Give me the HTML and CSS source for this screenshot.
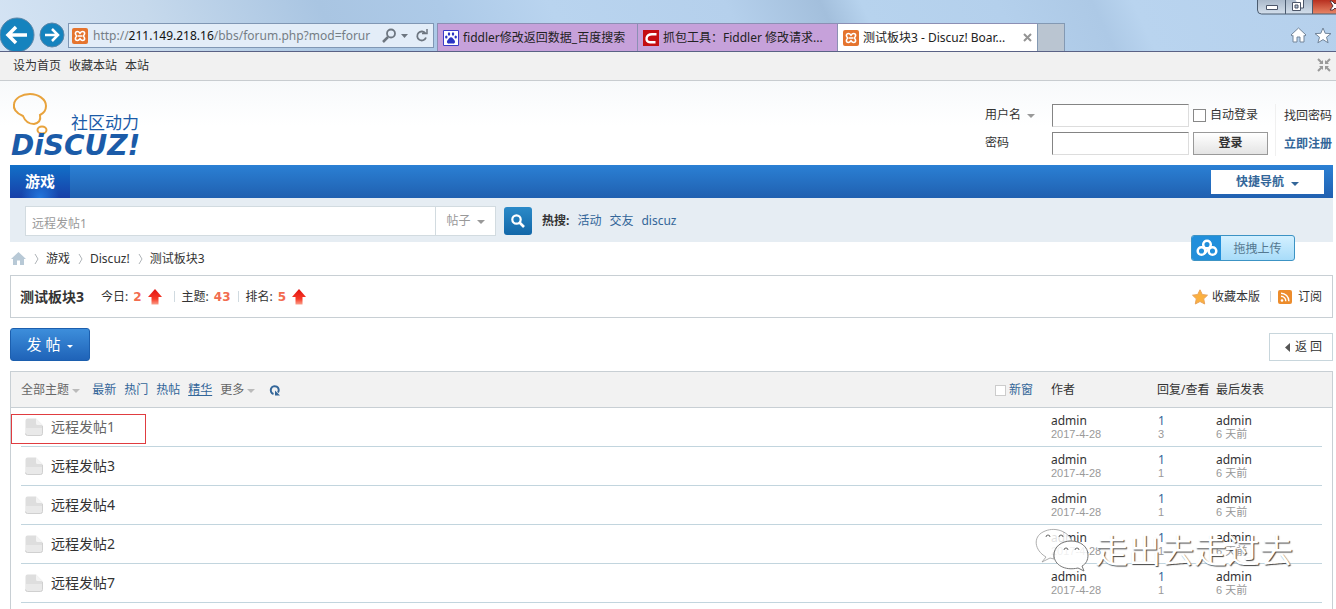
FILE: index.html
```html
<!DOCTYPE html>
<html lang="zh-CN">
<head>
<meta charset="utf-8">
<title>测试板块3 - Discuz! Board</title>
<link rel="stylesheet" href="styles.css">
</head>
<body>
<svg class="defs" width="0" height="0" aria-hidden="true">
  <symbol id="xampp" viewBox="0 0 16 16">
    <rect width="16" height="16" rx="2" fill="#e5742e"/>
    <path d="M8 5.200C7 3.800 6.300 3.500 5.400 3.500a2 2 0 0 0-2 2c0 1 .5 1.700 1.400 2.500-.9.800-1.400 1.500-1.400 2.500a2 2 0 0 0 2 2c.9 0 1.600-.3 2.600-1.700 1 1.400 1.700 1.700 2.600 1.700a2 2 0 0 0 2-2c0-1-.5-1.700-1.400-2.500.9-.8 1.400-1.500 1.400-2.500a2 2 0 0 0-2-2c-.9 0-1.600.3-2.600 1.700zM6 8h4" fill="none" stroke="#fff" stroke-width="1.600"/>
  </symbol>
  <symbol id="doc" viewBox="0 0 18 18">
    <path d="M2.500.5H11l6.500 6.500v8.500a2 2 0 0 1-2 2h-13a2 2 0 0 1-2-2v-13a2 2 0 0 1 2-2z" fill="#dedede"/>
    <path d="M1 10h16v5.500a1.500 1.500 0 0 1-1.500 1.500h-13A1.500 1.500 0 0 1 1 15.500z" fill="#e9e9e9"/>
    <path d="M.5 15.500a2 2 0 0 0 2 2h13a2 2 0 0 0 2-2V8" fill="none" stroke="#d0d0d0"/>
    <path d="M11 .5V5.500a1.500 1.500 0 0 0 1.500 1.500h5z" fill="#f4f4f4"/>
  </symbol>
  <symbol id="up" viewBox="0 0 14 16">
    <path d="M7 0l7 8h-3.500v7.500h-7V8H0z" fill="url(#red)"/>
  </symbol>
  <linearGradient id="red" x1="0" y1="0" x2="0" y2="1"><stop offset="0" stop-color="#e01010"/><stop offset=".65" stop-color="#f83c28"/><stop offset="1" stop-color="#f9a08c"/></linearGradient>
</svg>

<div class="chrome">
  <button class="nav-btn back" aria-label="后退"><svg width="36" height="36" viewBox="0 0 36 36"><circle cx="17" cy="18" r="17" fill="#1583be" stroke="#5c86a8"/><path d="M27 18H9M16 10l-8 8 8 8" fill="none" stroke="#fff" stroke-width="3.500"/></svg></button>
  <button class="nav-btn forward" aria-label="前进"><svg width="26" height="26" viewBox="0 0 26 26"><circle cx="13" cy="13" r="12" fill="#1583be" stroke="#5c86a8"/><path d="M6 13h12M13 7l6 6-6 6" fill="none" stroke="#fff" stroke-width="2.500"/></svg></button>
  <div class="address">
    <svg width="16" height="16"><use href="#xampp"/></svg>
    <span class="url">http://<b>211.149.218.16</b>/bbs/forum.php?mod=forur</span>
    <svg class="tools" width="48" height="18" viewBox="0 0 48 18" fill="none" stroke="#6d7680"><circle cx="10" cy="6.500" r="4" stroke-width="1.800"/><path d="M7 10l-5 5" stroke-width="2.500"/><path d="M20 7h7l-3.500 4z" fill="#6d7680" stroke="none"/><path d="M44.500 6.500A4.500 4.500 0 1 0 45 10.500" stroke-width="1.800"/><path d="M41 6.500h5V2" stroke-width="1.500"/></svg>
  </div>
  <div class="tabs">
    <div class="tab"><svg width="16" height="16" viewBox="0 0 16 16"><path d="M.5.5h15v15H.5z" fill="#fff" stroke="#3c3cc8"/><g fill="#2a35c4"><ellipse cx="3.300" cy="7" rx="1.200" ry="1.600"/><ellipse cx="6" cy="4" rx="1.200" ry="1.700"/><ellipse cx="10" cy="4" rx="1.200" ry="1.700"/><ellipse cx="12.700" cy="7" rx="1.200" ry="1.600"/><path d="M8 7.200c1.700 0 2 1.600 3.200 2.800 1.700 1.700.5 4-1.400 3.600-1.300-.3-2.300-.3-3.600 0-1.900.4-3.100-1.900-1.400-3.600C6 8.800 6.300 7.200 8 7.200z"/></g></svg><span>fiddler修改返回数据_百度搜索</span></div>
    <div class="tab"><svg width="16" height="16" viewBox="0 0 16 16"><path d="M0 0h16v16H0z" fill="#c40d12"/><path d="M13.500 4.200H9C5.800 4.200 4 5.800 3.600 8s.8 4.200 3.400 4.200h5.500" fill="none" stroke="#fff" stroke-width="2.400"/></svg><span>抓包工具：Fiddler 修改请求...</span></div>
    <div class="tab active"><svg width="16" height="16"><use href="#xampp"/></svg><span>测试板块3 - Discuz! Boar...</span><button class="tab-close" aria-label="关闭"><svg width="9" height="9" viewBox="0 0 9 9"><path d="M1 1l7 7M8 1L1 8" stroke="#949494" stroke-width="2"/></svg></button></div>
    <div class="tab-new"></div>
  </div>
  <div class="chrome-icons">
    <svg width="17" height="16" viewBox="0 0 17 16"><path d="M1 8l7.500-7L16 8l-1.200 1-.8-.7V15h-4v-5H7v5H3V8.300L2.200 9z" fill="#fff" stroke="#72859a"/></svg>
    <svg width="18" height="17" viewBox="0 0 18 17"><path d="M9 1l2.200 5.300 5.800.3-4.500 3.600 1.600 5.600L9 12.600l-5.100 3.200 1.600-5.600L1 6.600l5.800-.3z" fill="#fff" stroke="#72859a"/></svg>
  </div>
  <svg class="window-btns" width="79" height="15" viewBox="0 0 79 15"><defs><linearGradient id="g1" x1="0" y1="0" x2="0" y2="1"><stop offset="0" stop-color="#aab9ca"/><stop offset="1" stop-color="#d3dfec"/></linearGradient><linearGradient id="g2" x1="0" y1="0" x2="0" y2="1"><stop offset="0" stop-color="#b83020"/><stop offset="1" stop-color="#e98868"/></linearGradient></defs><path d="M.5 0v10a4 4 0 0 0 4 4H79V0z" fill="url(#g1)"/><path d="M56 0h23v14H56z" fill="url(#g2)"/><path d="M.5 0v10a4 4 0 0 0 4 4H79M28.500 0v14M55.500 0v14" fill="none" stroke="#4b5c70"/><path d="M9.500 5.500h11v4h-11z" fill="#fff" stroke="#4b5568"/><path d="M38.500 0v-1h8v9h-3M35.500 2.500h8v8h-8z" fill="#fff" stroke="#4b5568"/><path d="M38 5h3v3h-3z" fill="#b6c4d3" stroke="#4b5568"/><path d="M73 1h2l3 3 2-2v8l-2-2-2 2h-3l3-4z" fill="#fff" stroke="#553540"/></svg>
</div>

<div class="topbar">
  <a href="#">设为首页</a><a href="#">收藏本站</a><a href="#">本站</a>
  <svg class="collapse" width="14" height="14" viewBox="0 0 14 14"><path d="M1 1l4 4M13 1L9 5M1 13l4-4M13 13L9 9" stroke="#999" stroke-width="2"/><path d="M6 2v4H2zM8 2v4h4zM6 12V8H2zM8 12V8h4z" fill="#999"/></svg>
</div>

<div class="page">
  <header class="header">
    <a class="logo" href="#">
      <svg class="bubble" width="38" height="44" viewBox="0 0 38 44" fill="none" stroke="#e8a33d" stroke-width="2"><path d="M12 25C5 22 2 18 3 13 4 7 11 3 19 3s16 5 16 12c0 4-2 7-6 9 1 5-1 8-6 9-5 0-9-3-11-8z"/><ellipse cx="31" cy="39" rx="4.500" ry="3.500"/></svg>
      <span class="slogan">社区动力</span>
      <span class="brand">DiSCUZ!</span>
    </a>
    <form class="login">
      <label class="user" for="user">用户名 <i class="caret"></i></label>
      <input class="field" id="user" type="text">
      <label class="auto"><input class="box" type="checkbox">自动登录</label>
      <label for="pass">密码</label>
      <input class="field" id="pass" type="password">
      <button class="submit" type="button">登录</button>
    </form>
    <div class="account"><a href="#">找回密码</a><a class="register" href="#">立即注册</a></div>
  </header>

  <nav class="nav">
    <a class="nav-item" href="#">游戏</a>
    <button class="quick">快捷导航 <i class="caret"></i></button>
  </nav>

  <div class="search">
    <input class="query" type="text" aria-label="搜索" value="远程发帖1">
    <button class="kind">帖子 <i class="caret"></i></button>
    <button class="go" aria-label="搜索"><svg width="14" height="14" viewBox="0 0 14 14" fill="none" stroke="#fff"><circle cx="5.500" cy="5.500" r="4.200" stroke-width="2.200"/><path d="M8.500 8.500l4.500 4.500" stroke-width="2.600"/></svg></button>
    <strong>热搜:</strong>
    <a href="#">活动</a><a href="#">交友</a><a href="#">discuz</a>
    <button class="upload"><span class="cloud"><svg width="22" height="18" viewBox="0 0 22 18" fill="none" stroke="#fff" stroke-width="2.500"><circle cx="11" cy="5.500" r="3.800"/><circle cx="5.500" cy="12" r="3.800"/><path d="M13.500 8.500l-5 6"/><circle cx="16.500" cy="12" r="3.800"/></svg></span><span class="upload-text">拖拽上传</span></button>
  </div>

  <div class="crumbs">
    <svg width="15" height="13" viewBox="0 0 15 13"><path d="M7.500 0L15 7h-2v6H9V8.500H6V13H2V7H0z" fill="#b8c9d6"/></svg>
    <svg class="sep" width="5" height="10" viewBox="0 0 5 10"><path d="M1 0l3 5-3 5" fill="none" stroke="#b0b4b8"/></svg>
    <a href="#">游戏</a>
    <svg class="sep" width="5" height="10" viewBox="0 0 5 10"><path d="M1 0l3 5-3 5" fill="none" stroke="#b0b4b8"/></svg>
    <a href="#">Discuz!</a>
    <svg class="sep" width="5" height="10" viewBox="0 0 5 10"><path d="M1 0l3 5-3 5" fill="none" stroke="#b0b4b8"/></svg>
    <a href="#">测试板块3</a>
  </div>

  <section class="board">
    <h1>测试板块3</h1>
    <span class="stat first">今日: <b>2</b><svg width="14" height="16"><use href="#up"/></svg></span>
    <span class="stat">主题: <b>43</b></span>
    <span class="stat">排名: <b>5</b><svg width="14" height="16"><use href="#up"/></svg></span>
    <span class="board-links">
      <a href="#"><svg width="16" height="16" viewBox="0 0 16 16"><path d="M8 .8l2.300 4.700 5.200.7-3.800 3.600 1 5.200L8 12.500 3.300 15l1-5.200L.5 6.200l5.200-.7z" fill="#fbb03f" stroke="#e9a45c"/></svg>收藏本版</a>
      <a class="rss" href="#"><svg width="14" height="14" viewBox="0 0 14 14"><rect width="14" height="14" rx="2" fill="#ec8c2c"/><circle cx="4" cy="10.500" r="1.300" fill="#fff"/><path d="M3 6.300a5 5 0 0 1 4.800 5M3 3.200a8 8 0 0 1 7.900 8" fill="none" stroke="#fff" stroke-width="1.400"/></svg>订阅</a>
    </span>
  </section>

  <div class="actions">
    <button class="post">发 帖 <i class="caret"></i></button>
    <a class="return" href="#"><svg width="5" height="9" viewBox="0 0 5 9"><path d="M5 0v9L0 4.500z" fill="#555"/></svg>返 回</a>
  </div>

  <div class="threads">
    <table>
      <thead>
        <tr>
          <th><div class="filters">
            <a class="grey" href="#">全部主题 <i class="caret"></i></a>
            <a href="#">最新</a><a href="#">热门</a><a href="#">热帖</a><a class="under" href="#">精华</a>
            <a class="grey" href="#">更多 <i class="caret"></i></a>
            <svg width="12" height="12" viewBox="0 0 12 12"><path d="M4.500 10A4 4 0 1 1 9 8.500" fill="none" stroke="#336699" stroke-width="2"/><path d="M6 6.500V11.500h5z" fill="#336699"/></svg>
            <label class="new-window"><input class="box" type="checkbox">新窗</label>
          </div></th>
          <th class="by">作者</th><th class="num">回复/查看</th><th class="by">最后发表</th>
        </tr>
      </thead>
      <tbody>
        <tr><td><a class="title visited" href="#"><svg width="18" height="18"><use href="#doc"/></svg>远程发帖1</a></td><td>admin<small>2017-4-28</small></td><td class="count">1<small>3</small></td><td>admin<small>6 天前</small></td></tr>
        <tr><td><a class="title" href="#"><svg width="18" height="18"><use href="#doc"/></svg>远程发帖3</a></td><td>admin<small>2017-4-28</small></td><td class="count">1<small>1</small></td><td>admin<small>6 天前</small></td></tr>
        <tr><td><a class="title" href="#"><svg width="18" height="18"><use href="#doc"/></svg>远程发帖4</a></td><td>admin<small>2017-4-28</small></td><td class="count">1<small>1</small></td><td>admin<small>6 天前</small></td></tr>
        <tr><td><a class="title" href="#"><svg width="18" height="18"><use href="#doc"/></svg>远程发帖2</a></td><td>admin<small>2017-4-28</small></td><td class="count">1<small>1</small></td><td>admin<small>6 天前</small></td></tr>
        <tr><td><a class="title" href="#"><svg width="18" height="18"><use href="#doc"/></svg>远程发帖7</a></td><td>admin<small>2017-4-28</small></td><td class="count">1<small>1</small></td><td>admin<small>6 天前</small></td></tr>
      </tbody>
    </table>
    <div class="marker"></div>
    <div class="watermark">
      <svg width="54" height="46" viewBox="0 0 54 46"><path d="M11 29C-1 22-2 9 8 4c11-6 25-1 29 9-11 0-20 8-18 18l-4-1-8 4z" fill="#fff" fill-opacity=".85" stroke="#999" stroke-width=".8"/><path d="M36 13c10 0 17 6 17 14 0 5-2 9-6 11l2 5-6-3c-13 3-24-3-24-13 0-8 7-14 17-14z" fill="#fff" fill-opacity=".85" stroke="#777"/><g fill="none" stroke="#666"><path d="M11 9a2 2 0 0 1 4 0M24 9a2 2 0 0 1 4 0M29 22a2 2 0 0 1 4 0M40 22a2 2 0 0 1 4 0"/></g></svg>
      <span>走出去走过去</span>
    </div>
  </div>
</div>
</body>
</html>
```
FILE: styles.css
```css
* { box-sizing: border-box; }

body {
  margin: 0;
  min-height: 100vh;
  display: flex;
  flex-direction: column;
  overflow: hidden;
  background: #fff linear-gradient(#f7f9fb, #fff) 0 81px / 100% 45px no-repeat;
  color: #333;
  font: 12px/16px "Noto Sans", "Noto Sans CJK SC", sans-serif;
}

a { color: inherit; text-decoration: none; }
button, input { font: inherit; color: inherit; margin: 0; padding: 0; }
button { border: 0; background: none; }
svg { display: block; flex: none; }
.defs { position: absolute; }

.caret {
  display: inline-block;
  border: 4px solid transparent;
  border-top-color: #999;
  border-bottom: 0;
  margin-left: 3px;
  vertical-align: 1px;
}

/* Browser frame */
.chrome {
  position: relative;
  display: flex;
  align-items: flex-end;
  height: 52px;
  overflow: hidden;
  border-bottom: 1px solid #5a6285;
  background: linear-gradient(65deg, #d5e4f4 0, #c6d9ec 12%, #a9c5e2 25%, #adcae8 34%, #b9d4ef 42%, #b5d0ec 55%, #a3bfdc 62%, #b7d3ee 65%, #b4d0ec 75%, #adc9e6 82%, #b9d4ef 85%, #b5d0ec 100%);
}
.nav-btn { flex: none; }
.back { height: 34px; overflow: hidden; }
.forward { margin: 0 3px 3px; }
.address {
  display: flex;
  align-items: center;
  width: 366px;
  height: 25px;
  margin-bottom: 3px;
  padding: 0 4px 0 3px;
  border: 1px solid #8097b4;
  background: #e3edf8;
}
.url { flex: 1; overflow: hidden; white-space: nowrap; margin-left: 5px; color: #757d85; }
.url b { font-weight: 400; color: #111; }
.tools { margin-left: 4px; }
.tabs { display: flex; margin-left: 3px; height: 28px; }
.tab {
  display: flex;
  align-items: center;
  gap: 4px;
  width: 200px;
  padding: 0 5px;
  border: 1px solid #8c8fb4;
  border-width: 1px 0 0 1px;
  background: #c6a1da;
  color: #222;
  white-space: nowrap;
}
.tab.active { background: #fff; }
.tab-close { margin-left: auto; }
.tab-new { width: 28px; border: 1px solid #8399b3; border-bottom: 0; background: #bac5d1; }
.chrome-icons { display: flex; gap: 7px; margin: 0 4px 7px auto; }
.window-btns { position: absolute; top: 0; right: 0; }

.topbar {
  display: flex;
  align-items: center;
  gap: 8px;
  height: 29px;
  padding: 0 5px 0 13px;
  border-bottom: 1px solid #c8ccd0;
  background: #f1f1f1;
}
.collapse { margin: 0 0 3px auto; }

.page { flex: 1; display: flex; flex-direction: column; padding: 0 3px 0 10px; }

/* Logo and login */
.header { display: flex; align-items: center; height: 84px; padding-right: 1px; }
.logo { display: grid; grid-template-columns: 38px auto; margin: 4px auto 0 1px; color: #1b5ba8; }
.bubble { grid-row: 1; margin-bottom: -2px; }
.slogan { align-self: end; margin-left: 22px; font-size: 17px; line-height: 20px; white-space: nowrap; }
.brand { grid-column: 1 / 3; font: italic bold 28px/26px "DejaVu Sans", sans-serif; }
.login {
  display: grid;
  grid-template-columns: 67px 137px 75px;
  grid-template-rows: 24px 24px;
  gap: 4px 0;
  align-items: center;
  margin-top: 12px;
}
.field { height: 23px; border: 1px solid #ddd; border-color: #848484 #ddd #ddd #848484; background: #fff; }
.auto { display: flex; align-items: center; gap: 4px; margin-left: 4px; white-space: nowrap; }
.box { appearance: none; width: 13px; height: 13px; border: 1px solid #888; background: #fff; }
.submit {
  width: 75px;
  height: 23px;
  margin-left: 4px;
  border: 1px solid #999;
  background: linear-gradient(#fff, #e4e4e4);
  font-weight: 700;
}
.account {
  display: flex;
  flex-direction: column;
  gap: 12px;
  margin: 13px 0 0 11px;
  padding: 4px 0 4px 8px;
  border-left: 1px solid #f0f0f0;
}
.register { color: #336699; font-weight: 700; }

/* Navigation and search */
.nav {
  display: flex;
  justify-content: space-between;
  height: 33px;
  padding-right: 9px;
  background: linear-gradient(#2b80d4, #2060b0);
}
.nav-item {
  width: 60px;
  background: radial-gradient(ellipse at 50% 100%, #2277dd, transparent 45%), linear-gradient(#1270c8, #1740a8);
  color: #fff;
  font-size: 15px;
  line-height: 32px;
  font-weight: 700;
  text-align: center;
}
.quick { width: 113px; height: 24px; margin-top: 5px; background: #fff; color: #336699; font-weight: 700; }
.quick .caret { border-top-color: #336699; vertical-align: 0; margin-left: 4px; }
.search {
  position: relative;
  display: flex;
  align-items: center;
  height: 44px;
  padding: 2px 15px 0;
  background: #e6edf3;
}
.search a { margin-left: 8px; color: #336699; }
.search strong { margin-left: 10px; }
.query { width: 410px; height: 30px; padding: 4px 6px 0; border: 1px solid #d2dbe0; border-right: 0; background: #fff; color: #999; }
.kind { width: 61px; height: 30px; border: 1px solid #d2dbe0; background: #fff; color: #999; }
.go { display: grid; place-items: center; width: 28px; height: 28px; margin-left: 8px; border-radius: 3px; background: linear-gradient(#2b8ac8, #1267a8); }
.upload {
  position: absolute;
  top: 37px;
  right: 38px;
  display: flex;
  width: 104px;
  height: 26px;
  border: 1px solid #3c93c4;
  border-radius: 3px;
  background: linear-gradient(#d3f0ff, #a8dcf9);
  overflow: hidden;
}
.cloud { display: grid; place-items: center; width: 29px; height: 24px; background: #218fdb; }
.upload-text { flex: 1; line-height: 26px; color: #547890; }

.crumbs { display: flex; align-items: center; height: 33px; padding-left: 1px; }
.sep { margin: 0 7px 0 8px; }

/* Board summary */
.board { display: flex; align-items: center; height: 43px; padding: 0 10px 0 9px; border: 1px solid #c8cfd4; }
.board h1 { margin: 0 15px 0 0; font-size: 14px; line-height: 20px; }
.stat { display: flex; align-items: center; gap: 5px; padding: 0 7px 0 8px; background: linear-gradient(#d0dae0, #d0dae0) 0 50% / 1px 11px no-repeat; }
.stat.first { padding: 0 12px 0 2px; background: none; }
.stat b { color: #f26c4f; font-family: "DejaVu Sans", sans-serif; }
.stat svg { margin-left: 1px; }
.board-links { display: flex; align-items: center; margin-left: auto; }
.board-links a { display: flex; align-items: center; gap: 4px; }
.board-links .rss { gap: 6px; margin-left: 10px; padding-left: 8px; background: linear-gradient(#cbd6e0, #cbd6e0) 0 50% / 1px 11px no-repeat; }

.actions { display: flex; justify-content: space-between; align-items: flex-start; padding: 10px 0; }
.post {
  width: 80px;
  height: 33px;
  padding-bottom: 2px;
  border: 1px solid #1c5fae;
  border-radius: 3px;
  background: linear-gradient(#3d8edb, #1f63b8);
  color: #fff;
  font-size: 15px;
}
.post .caret { border-width: 3px; border-bottom: 0; border-top-color: #fff; vertical-align: 2px; }
.return { display: flex; align-items: center; gap: 5px; height: 28px; margin-top: 5px; padding: 0 10px 0 15px; border: 1px solid #c8d6dc; }

/* Thread list */
.threads {
  position: relative;
  flex: 1;
  padding: 0 10px;
  border: 1px solid #c8cfd4;
  border-bottom: 0;
  background: linear-gradient(#f2f2f2 35px, #c8cfd4 35px) 0 0 / 100% 36px no-repeat;
}
table { width: 100%; border-spacing: 0; table-layout: fixed; }
th { height: 36px; padding: 0; font-weight: 400; text-align: left; white-space: nowrap; }
.by { width: 106px; }
.num { width: 59px; }
.filters { display: flex; align-items: center; gap: 8px; color: #336699; }
.filters .grey { color: #666; margin-right: 4px; }
.filters .caret { border-top-color: #bbb; margin-left: 0; }
.under { text-decoration: underline; }
.filters svg { margin-left: 2px; }
.new-window { display: flex; align-items: center; gap: 3px; margin: 0 18px 0 auto; }
.new-window .box { width: 11px; height: 11px; border-color: #ccc; }
td { height: 39px; padding: 0; border-bottom: 1px solid #c2d5de; line-height: 14px; }
small { display: block; color: #999; font: 11px/13px "Liberation Sans", "Noto Sans CJK SC", sans-serif; }
.count { padding-left: 1px; color: #336699; }
.title { display: flex; align-items: center; gap: 8px; padding-left: 4px; font-size: 14px; line-height: 20px; }
.visited { color: #666; }
.marker { position: absolute; top: 42px; left: 0; width: 135px; height: 30px; border: 1px solid #e03c40; }
.watermark { position: absolute; right: 39px; top: 156px; display: flex; align-items: center; gap: 6px; color: #fff; font-size: 33px; line-height: 46px; }
.watermark span { text-shadow: 1px 1px 1px #444; }
```
